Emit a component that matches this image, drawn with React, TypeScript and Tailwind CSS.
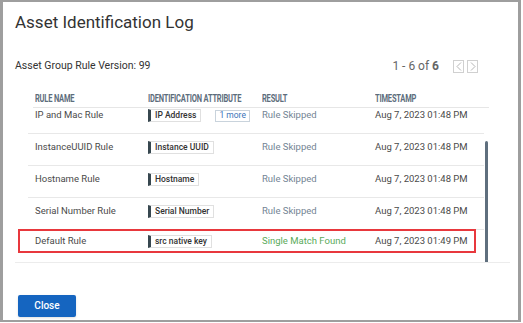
import React from 'react';

interface LogRow {
  rule: string;
  attribute: string;
  extra?: string;
  result: string;
  matched?: boolean;
  timestamp: string;
}

const rows: LogRow[] = [
  { rule: 'IP and Mac Rule', attribute: 'IP Address', extra: '1 more', result: 'Rule Skipped', timestamp: 'Aug 7, 2023 01:48 PM' },
  { rule: 'InstanceUUID Rule', attribute: 'Instance UUID', result: 'Rule Skipped', timestamp: 'Aug 7, 2023 01:48 PM' },
  { rule: 'Hostname Rule', attribute: 'Hostname', result: 'Rule Skipped', timestamp: 'Aug 7, 2023 01:48 PM' },
  { rule: 'Serial Number Rule', attribute: 'Serial Number', result: 'Rule Skipped', timestamp: 'Aug 7, 2023 01:48 PM' },
  { rule: 'Default Rule', attribute: 'src native key', result: 'Single Match Found', matched: true, timestamp: 'Aug 7, 2023 01:49 PM' },
];

function Cells({ row }: { row: LogRow }) {
  return (
    <>
      <div className="w-[120px] shrink-0 pl-[7px] text-[9.5px] leading-[14px] text-[#4a4a4a] whitespace-nowrap">{row.rule}</div>
      <div className="w-[114px] shrink-0 flex items-center gap-[14px] pt-[1px]">
        <span className="h-[13px] shrink-0 flex items-center whitespace-nowrap border border-[#e0e0e0] border-l-[3px] border-l-[#37474f] bg-white pl-[4px] pr-[4px] text-[8.5px] font-medium leading-none text-[#333]">
          {row.attribute}
        </span>
        {row.extra && (
          <span className="h-[12px] shrink-0 flex items-center whitespace-nowrap border border-[#c9d3dc] px-[3px] text-[8.5px] leading-none text-[#3b73b9]">
            {row.extra}
          </span>
        )}
      </div>
      <div className={`w-[113px] shrink-0 text-[9.5px] leading-[14px] whitespace-nowrap ${row.matched ? 'text-[#5aaa5a]' : 'text-[#738494]'}`}>
        {row.result}
      </div>
      <div className="text-[9.5px] leading-[14px] text-[#4a4a4a] whitespace-nowrap">{row.timestamp}</div>
    </>
  );
}

function HeaderLabel({ children, width }: { children: React.ReactNode; width?: string }) {
  return (
    <div className={width}>
      <span className="inline-block origin-left scale-x-75 text-[10px] font-bold uppercase tracking-tight text-[#5d6d7c] whitespace-nowrap">
        {children}
      </span>
    </div>
  );
}

function Chevron({ dir }: { dir: 'left' | 'right' }) {
  return (
    <span className="w-[11px] h-[13px] flex items-center justify-center border border-[#d0d0d0] bg-white">
      <svg width="6" height="9" viewBox="0 0 6 9" fill="none" stroke="#b5b5b5" strokeWidth="1">
        <path d={dir === 'left' ? 'M5 0.5 L1 4.5 L5 8.5' : 'M1 0.5 L5 4.5 L1 8.5'} />
      </svg>
    </span>
  );
}

export default function App() {
  return (
    <div className="w-[523px] h-[323px] bg-white" style={{ fontFamily: 'Roboto, "Liberation Sans", sans-serif' }}>
      <div className="w-[521px] h-[322px] border-[#9e9e9e] border-l-[3px] border-t-[2px] border-r-[3px] border-b-[2px] bg-white flex flex-col">
        {/* Title */}
        <div className="pl-[12px] pt-[8px] h-[31px] text-[17px] leading-[24px] text-[#333]">Asset Identification Log</div>

        {/* Version + pagination */}
        <div className="mt-[23px] h-[20px] pl-[12px] pr-[40px] flex items-center justify-between">
          <span className="text-[10.5px] text-[#333]">Asset Group Rule Version: 99</span>
          <div className="flex items-center gap-[3px]">
            <span className="mr-[11px] text-[12px] text-[#666]">
              1 - 6 of <span className="font-bold">6</span>
            </span>
            <Chevron dir="left" />
            <Chevron dir="right" />
          </div>
        </div>

        {/* Table */}
        <div className="mt-[10px] ml-[15px] w-[471px]">
          <div className="ml-[15px] h-[22px] flex items-center border-b border-[#e6e6e6]">
            <HeaderLabel width="w-[115px] pl-[2px]">Rule Name</HeaderLabel>
            <HeaderLabel width="w-[114px]">Identification Attribute</HeaderLabel>
            <HeaderLabel width="w-[113px]">Result</HeaderLabel>
            <HeaderLabel>Timestamp</HeaderLabel>
          </div>
          <div className="h-[154px] flex overflow-hidden">
            <div className="w-[466px]">
              {rows.map((row, i) =>
                row.matched ? (
                  <div key={row.rule} className="h-[32px]">
                    <div className="-mt-[1px] w-[458px] h-[24px] border-2 border-[#e8383d] pl-[8px] pt-[3px] flex items-start">
                      <Cells row={row} />
                    </div>
                  </div>
                ) : (
                  <div
                    key={row.rule}
                    className={`ml-[10px] h-[32px] pt-[6px] flex items-start border-b border-[#e8e8e8] ${i === 0 ? '-mt-[6px]' : ''}`}
                  >
                    <Cells row={row} />
                  </div>
                )
              )}
            </div>
            <div className="w-[5px] pt-[33px]">
              <div className="ml-[1px] w-[3px] h-[122px] rounded-full bg-[#5f6f7e]" />
            </div>
          </div>
        </div>

        {/* Footer */}
        <div className="ml-[12px] mr-[8px] border-t border-[#ececec]" />
        <div className="pt-[29px] pl-[15px]">
          <button className="w-[58px] h-[22px] rounded-[2px] bg-[#1565c0] text-[10px] font-medium text-white shadow-sm">
            Close
          </button>
        </div>
      </div>
    </div>
  );
}
